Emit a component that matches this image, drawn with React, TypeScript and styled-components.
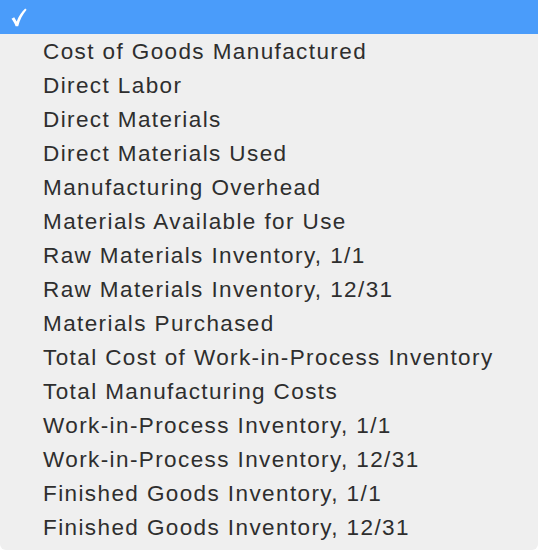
import React from "react";
import styled, { createGlobalStyle } from "styled-components";

const GlobalStyle = createGlobalStyle`
  html, body {
    margin: 0;
    padding: 0;
    background: #ffffff;
  }
`;

const items = [
  "",
  "Cost of Goods Manufactured",
  "Direct Labor",
  "Direct Materials",
  "Direct Materials Used",
  "Manufacturing Overhead",
  "Materials Available for Use",
  "Raw Materials Inventory, 1/1",
  "Raw Materials Inventory, 12/31",
  "Materials Purchased",
  "Total Cost of Work-in-Process Inventory",
  "Total Manufacturing Costs",
  "Work-in-Process Inventory, 1/1",
  "Work-in-Process Inventory, 12/31",
  "Finished Goods Inventory, 1/1",
  "Finished Goods Inventory, 12/31",
];

const Menu = styled.div`
  width: 538px;
  height: 550px;
  box-sizing: border-box;
  background: #efefef;
  border-radius: 0 0 6px 6px;
  font-family: "Liberation Sans", Arial, sans-serif;
  display: flex;
  flex-direction: column;
  overflow: hidden;
`;

const Row = styled.div<{ $active?: boolean }>`
  height: 34px;
  flex: 0 0 34px;
  display: flex;
  align-items: center;
  background: ${(p) => (p.$active ? "#4a9cfa" : "transparent")};
  color: ${(p) => (p.$active ? "#ffffff" : "#2e2e2e")};
  font-size: 22.5px;
`;

const Check = styled.span`
  width: 43px;
  flex: 0 0 43px;
  box-sizing: border-box;
  padding-left: 11px;
  display: flex;
  align-items: center;
`;

const Label = styled.span`
  white-space: nowrap;
  letter-spacing: 1.4px;
  padding-top: 1px;
`;

const CheckMark = () => (
  <svg width="16" height="19" viewBox="0 0 16 19">
    <path
      d="M0.5 10.8 L3.2 9.2 L5.7 13.4 C7.8 8.2 10.5 4.2 14.2 0.6 L15.6 1.8 C11.6 6.6 8.9 11.6 7.2 18.3 L4.6 18.3 C3.5 15.3 2.2 13 0.5 10.8 Z"
      fill="#ffffff"
    />
  </svg>
);

const App = () => {
  return (
    <>
      <GlobalStyle />
      <Menu>
        {items.map((label, i) => (
          <Row key={i} $active={i === 0}>
            <Check>{i === 0 && <CheckMark />}</Check>
            <Label>{label}</Label>
          </Row>
        ))}
      </Menu>
    </>
  );
};

export default App;
